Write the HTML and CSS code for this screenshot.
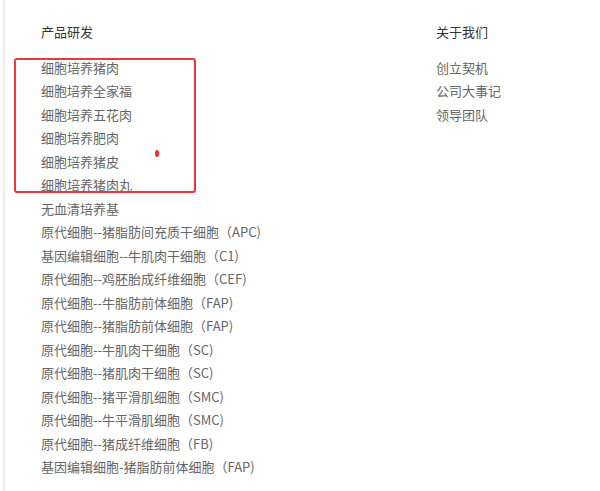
FILE: index.html
```html
<!DOCTYPE html>
<html lang="zh">
<head>
<meta charset="utf-8">
<link rel="stylesheet" href="styles.css">
</head>
<body>
<div class="page">
  <div class="cols">
    <div class="col col-products">
      <h3 class="col-title">产品研发</h3>
      <ul class="links">
        <li>细胞培养猪肉</li>
        <li>细胞培养全家福</li>
        <li>细胞培养五花肉</li>
        <li>细胞培养肥肉</li>
        <li>细胞培养猪皮</li>
        <li>细胞培养猪肉丸</li>
        <li>无血清培养基</li>
        <li>原代细胞--猪脂肪间充质干细胞（APC)</li>
        <li>基因编辑细胞--牛肌肉干细胞（C1)</li>
        <li>原代细胞--鸡胚胎成纤维细胞（CEF)</li>
        <li>原代细胞--牛脂肪前体细胞（FAP)</li>
        <li>原代细胞--猪脂肪前体细胞（FAP)</li>
        <li>原代细胞--牛肌肉干细胞（SC)</li>
        <li>原代细胞--猪肌肉干细胞（SC)</li>
        <li>原代细胞--猪平滑肌细胞（SMC)</li>
        <li>原代细胞--牛平滑肌细胞（SMC)</li>
        <li>原代细胞--猪成纤维细胞（FB)</li>
        <li>基因编辑细胞-猪脂肪前体细胞（FAP)</li>
      </ul>
    </div>
    <div class="col col-about">
      <h3 class="col-title">关于我们</h3>
      <ul class="links">
        <li>创立契机</li>
        <li>公司大事记</li>
        <li>领导团队</li>
      </ul>
    </div>
  </div>
  <div class="mark-box"></div>
  <div class="mark-dot"></div>
</div>
</body>
</html>
```
FILE: styles.css
```css
* { box-sizing: border-box; }
html, body { margin: 0; padding: 0; background: #fff; }
body {
  font-family: "Noto Sans CJK SC", "Noto Sans", sans-serif;
  font-size: 13px;
  color: #666;
}
.page {
  position: relative;
  width: 600px;
  height: 491px;
  margin-left: 3px;
  border-left: 2px solid #eeeeee;
  overflow: hidden;
}
.cols {
  display: flex;
  padding-left: 36px;
  padding-top: 20px;
}
.col-products { width: 395px; }
.col-title {
  margin: 0 0 12px 0;
  font-size: 13px;
  font-weight: normal;
  color: #333;
  line-height: 23.5px;
}
.links {
  list-style: none;
  margin: 0;
  padding: 0;
}
.links li {
  line-height: 23.5px;
  white-space: nowrap;
  color: #666;
}
.mark-box {
  position: absolute;
  left: 9px;
  top: 58px;
  width: 182px;
  height: 135px;
  border: 2.5px solid #f2353b;
  border-radius: 3px;
}
.mark-dot {
  position: absolute;
  left: 150px;
  top: 150px;
  width: 4px;
  height: 7px;
  border-radius: 50%;
  background: #f52a2a;
}
```
